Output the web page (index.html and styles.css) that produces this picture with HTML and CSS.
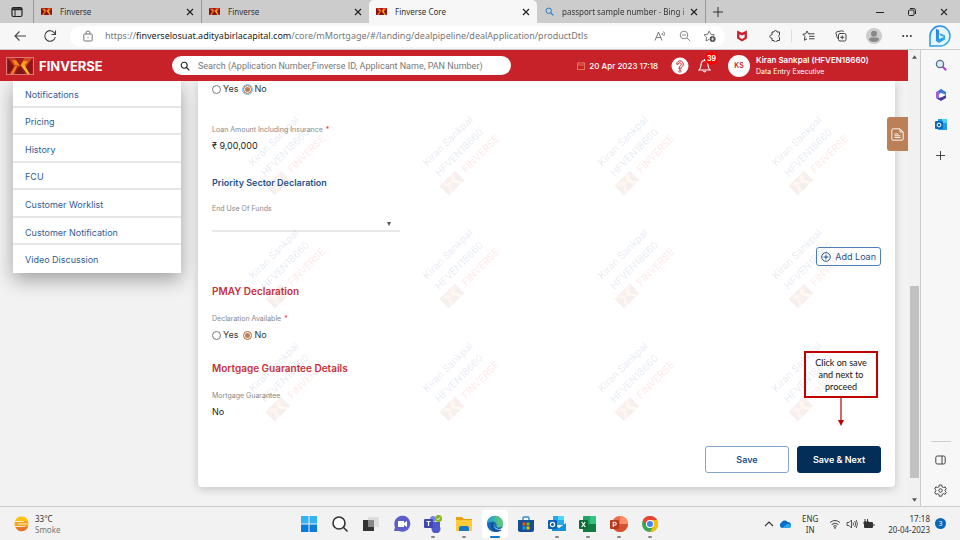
FILE: index.html
```html
<!DOCTYPE html>
<html lang="en">
<head>
<meta charset="utf-8">
<meta name="viewport" content="width=device-width, initial-scale=1">
<title>Finverse Core</title>
<link rel="stylesheet" href="styles.css">
</head>
<body>
<svg class="defs" aria-hidden="true">
  <symbol id="logo" viewBox="0 0 28 18">
    <rect width="28" height="18" fill="#a8191c"/>
    <path d="M0 0l9 9-9 9z" fill="#7c1116"/><path d="M0 0h9l5 9-5 3z" fill="#c4301c"/>
    <path d="M9 0h10l-5 9z" fill="#a8191c"/><path d="M19 0h9l-9 12-5-3z" fill="#d8481d"/>
    <path d="M28 0v18l-9-6z" fill="#8c1519"/><path d="M14 9l5 9H9z" fill="#7d1417"/>
    <path d="M11 9l-4 9H3l5-9z" fill="#ef7a1d"/><path d="M15 8l7 10h3l-6-10z" fill="#f9c22c"/>
    <path d="M5 2l5 1 4 6-6-1z" fill="#f08a1e"/><path d="M18 3l5 1-5 5-3-1z" fill="#f6a11c"/>
  </symbol>
  <symbol id="close" viewBox="0 0 8 8"><path d="M1 1l6 6M7 1L1 7" fill="none" stroke="currentColor" stroke-width="1.2"/></symbol>
  <symbol id="plus" viewBox="0 0 10 10"><path d="M5 0v10M0 5h10" fill="none" stroke="currentColor"/></symbol>
  <symbol id="search" viewBox="0 0 12 12"><circle cx="5" cy="5" r="3.6" fill="none" stroke="currentColor" stroke-width="1.3"/><path d="M7.7 7.7l3.5 3.5" stroke="currentColor" stroke-width="1.5"/></symbol>
</svg>

<nav class="tabs" aria-label="Browser tabs">
  <button class="tab-menu" aria-label="Tab actions"><svg width="12" height="12" viewBox="0 0 12 12"><rect x="1" y="1.5" width="10" height="9" rx="1.5" fill="none" stroke="#222" stroke-width="1.2"/><path d="M1 3.2h10" stroke="#222" stroke-width="2"/><path d="M4 3v7" stroke="#222"/></svg></button>
  <div class="tab"><svg class="favicon"><use href="#logo"/></svg><a href="#">Finverse</a><button aria-label="Close tab"><svg><use href="#close"/></svg></button></div>
  <div class="tab"><svg class="favicon"><use href="#logo"/></svg><a href="#">Finverse</a><button aria-label="Close tab"><svg><use href="#close"/></svg></button></div>
  <div class="tab active"><svg class="favicon"><use href="#logo"/></svg><a href="#">Finverse Core</a><button aria-label="Close tab"><svg><use href="#close"/></svg></button></div>
  <div class="tab"><svg class="favicon blue"><use href="#search"/></svg><a href="#" class="fade">passport sample number - Bing i</a><button aria-label="Close tab"><svg><use href="#close"/></svg></button></div>
  <button class="new-tab" aria-label="New tab"><svg width="10" height="10"><use href="#plus"/></svg></button>
  <div class="window-buttons">
    <button aria-label="Minimize"><svg width="8" height="8" viewBox="0 0 8 8"><path d="M0 4.5h8" stroke="#222"/></svg></button>
    <button aria-label="Restore"><svg width="8" height="8" viewBox="0 0 8 8" fill="none" stroke="#222"><rect x=".5" y="2" width="5.5" height="5.5" rx="1"/><path d="M2 .5h3.5a2 2 0 0 1 2 2V6"/></svg></button>
    <button aria-label="Close"><svg width="8" height="8"><use href="#close"/></svg></button>
  </div>
</nav>

<div class="toolbar">
  <button aria-label="Back"><svg width="14" height="12" viewBox="0 0 14 12" fill="none" stroke="#444" stroke-width="1.1"><path d="M13 6H2M6.500 1.500L2 6l4.500 4.500"/></svg></button>
  <button aria-label="Refresh"><svg width="14" height="14" viewBox="0 0 14 14" fill="none" stroke="#444" stroke-width="1.1"><path d="M12.200 5.500A5.300 5.300 0 1 0 12.300 8M12.500 1.500v4H8.500"/></svg></button>
  <div class="address">
    <svg width="10" height="12" viewBox="0 0 10 12" fill="none" stroke="#777"><rect x=".8" y="4" width="8.400" height="7" rx="1"/><path d="M3 4V3a2 2 0 0 1 4 0v1M5 7v1"/></svg>
    <div class="url" role="textbox" aria-label="Address">https://<strong>finverselosuat.adityabirlacapital.com</strong>/core/mMortgage/#/landing/dealpipeline/dealApplication/productDtls</div>
    <button aria-label="Read aloud"><svg width="13" height="12" viewBox="0 0 13 12" fill="none" stroke="#777"><path d="M1 10.500L4.500 2 8 10.500M2.300 7.500h4.400M8 3q1 1 0 2M9.500 1.500q2 2 .2 4.500"/></svg></button>
    <button aria-label="Zoom out"><svg width="12" height="12" viewBox="0 0 12 12" fill="none" stroke="#888"><circle cx="5" cy="5" r="3.800"/><path d="M3 5h4M8 8l3.200 3.200"/></svg></button>
    <button aria-label="Add favourite"><svg width="13" height="12" viewBox="0 0 13 12" fill="none" stroke="#777"><path d="M6.200 9.300L3 11l.6-3.700L1 4.800l3.600-.5L6.200 1l1.600 3.300 3.700.5-1 1"/><circle cx="9.600" cy="9" r="2.600" fill="#555" stroke="#555"/><path d="M8.200 9H11M9.600 7.600v2.800" stroke="#fff" stroke-width=".8"/></svg></button>
  </div>
  <div class="extensions">
    <button aria-label="Antivirus"><svg width="12" height="12" viewBox="0 0 10 11"><path d="M.5.500l4.500 2 4.500-2v7.300L5 10.500.5 7.800z" fill="#c8202c"/><path d="M2.600 3.800L5 5l2.400-1.200v3L5 8.200 2.600 6.800z" fill="#f7f7f7"/></svg></button>
    <button aria-label="Extensions"><svg width="12" height="12" viewBox="0 0 12 12" fill="none" stroke="#444"><path d="M3 2h2a1.500 1.500 0 0 1 3 0h2.500v3a1.400 1.400 0 0 0 0 2.500v3H8a1.500 1.500 0 0 1-3 0H3V8a1.600 1.600 0 1 1 0-3z"/></svg></button>
    <button aria-label="Favourites" class="divided"><svg width="13" height="12" viewBox="0 0 13 12" fill="none" stroke="#444"><path d="M7.500 3.800L6.500 3.800 5 1 3.700 3.800.8 4.200 3 6.500l-.6 3.800L5 8.800M7 3.800h5.500M7 6.300h5.500M7 8.800h5.500"/></svg></button>
    <button aria-label="Collections"><svg width="12" height="12" viewBox="0 0 12 12" fill="none" stroke="#444"><rect x="3.500" y="3.500" width="7.500" height="7.500" rx="1.500"/><path d="M2.500 8.500L1 3.500q-.3-1.300 1-1.700L6.500.8q1.500-.3 2 1.200M7.200 5.300v4M5.200 7.300h4"/></svg></button>
    <button aria-label="Profile"><svg width="16" height="16" viewBox="0 0 16 16"><circle cx="8" cy="8" r="8" fill="#ccc"/><circle cx="8" cy="5.800" r="3" fill="#888"/><path d="M3 12q0-2.500 2.500-2.500h5Q13 9.500 13 12q-2 2-5 2t-5-2z" fill="#888"/></svg></button>
    <button aria-label="Settings and more"><svg width="10" height="4" viewBox="0 0 10 4" fill="#333"><circle cx="1.200" cy="2" r="1"/><circle cx="5" cy="2" r="1"/><circle cx="8.800" cy="2" r="1"/></svg></button>
    <button aria-label="Bing chat"><svg width="22" height="22" viewBox="0 0 22 22"><defs><linearGradient id="bing" x1="0" y1="0" x2="1" y2="1"><stop stop-color="#2b7de8"/><stop offset="1" stop-color="#2ab7e8"/></linearGradient></defs><path d="M1 21V11A10 10 0 1 1 11 21z" fill="#e9f5fe" stroke="url(#bing)" stroke-width="1.500"/><path d="M7 4l3 1v9l5-2-3.500-1.500L10 8l6 2.500v4L10 18l-3-2z" fill="url(#bing)"/></svg></button>
  </div>
</div>

<div class="browser">
  <div class="page">
    <header class="app-header">
      <svg class="brand-logo"><use href="#logo"/></svg>
      <span class="brand">FINVERSE</span>
      <label class="search"><svg><use href="#search"/></svg><input type="search" aria-label="Search" placeholder="Search (Application Number,Finverse ID, Applicant Name, PAN Number)"></label>
      <div class="date"><svg width="8" height="8" viewBox="0 0 8 8" fill="none" stroke="#e0745a"><rect x=".5" y="1" width="7" height="6.500"/><path d="M.5 3h7M2 0v1M6 0v1"/></svg><time>20 Apr 2023 17:18</time></div>
      <button class="help" aria-label="Help"><svg width="18" height="18" viewBox="0 0 18 18"><circle cx="9" cy="9" r="8.500" fill="#fff"/><path d="M5.700 7.200a3.300 3.300 0 1 1 5.300 2.600Q9.800 10.600 9.800 12H8q0-2.500 1.500-3.400a1.500 1.500 0 1 0-2.200-1.400z" fill="none" stroke="#c7222a"/><circle cx="8.900" cy="14.200" r="1.100" fill="none" stroke="#c7222a" stroke-width=".8"/></svg></button>
      <button class="bell" aria-label="Notifications"><svg width="13" height="15" viewBox="0 0 13 15" fill="none" stroke="#fff" stroke-width="1.100"><path d="M1 12h11q-1.700-1.500-2-5-.2-4.500-3.500-4.500T3 7q-.3 3.500-2 5zM5 13q1.500 1.800 3 0M6.500 1v1.500"/></svg><span>39</span></button>
      <span class="avatar">KS</span>
      <div class="user"><strong>Kiran Sankpal (HFVEN18660)</strong><span>Data Entry Executive</span></div>
    </header>
    <div class="content">
      <nav class="side-menu" aria-label="Application">
        <a href="#">Notifications</a>
        <a href="#">Pricing</a>
        <a href="#">History</a>
        <a href="#">FCU</a>
        <a href="#">Customer Worklist</a>
        <a href="#">Customer Notification</a>
        <a href="#">Video Discussion</a>
      </nav>
      <main class="card">
        <div class="radios">
          <label><input type="radio" name="insurance">Yes</label>
          <label><input type="radio" name="insurance" class="focused" checked>No</label>
        </div>
        <section class="loan">
          <div class="label">Loan Amount Including Insurance <em>*</em></div>
          <div class="value">₹ 9,00,000</div>
        </section>
        <section class="priority">
          <h3>Priority Sector Declaration</h3>
          <label class="label" for="funds">End Use Of Funds</label>
          <div class="select"><select id="funds"><option></option></select></div>
        </section>
        <button class="add"><svg width="10" height="10" viewBox="0 0 10 10" fill="none" stroke="currentColor"><circle cx="5" cy="5" r="4.300"/><path d="M5 2.500v5M2.500 5h5"/></svg>Add Loan</button>
        <section class="pmay">
          <h2>PMAY Declaration</h2>
          <div class="label">Declaration Available <em>*</em></div>
          <div class="radios">
            <label><input type="radio" name="pmay">Yes</label>
            <label><input type="radio" name="pmay" checked>No</label>
          </div>
        </section>
        <section class="guarantee">
          <h2>Mortgage Guarantee Details</h2>
          <div class="label">Mortgage Guarantee</div>
          <div class="value">No</div>
        </section>
        <div class="actions"><button>Save</button><button class="primary">Save &amp; Next</button></div>
        <div class="watermarks" aria-hidden="true">
          <div><p>Kiran Sankpal<br>HFVEN18660<br><svg><use href="#logo"/></svg><b>FINVERSE</b></p></div>
          <div><p>Kiran Sankpal<br>HFVEN18660<br><svg><use href="#logo"/></svg><b>FINVERSE</b></p></div>
          <div><p>Kiran Sankpal<br>HFVEN18660<br><svg><use href="#logo"/></svg><b>FINVERSE</b></p></div>
          <div><p>Kiran Sankpal<br>HFVEN18660<br><svg><use href="#logo"/></svg><b>FINVERSE</b></p></div>
          <div><p>Kiran Sankpal<br>HFVEN18660<br><svg><use href="#logo"/></svg><b>FINVERSE</b></p></div>
          <div><p>Kiran Sankpal<br>HFVEN18660<br><svg><use href="#logo"/></svg><b>FINVERSE</b></p></div>
          <div><p>Kiran Sankpal<br>HFVEN18660<br><svg><use href="#logo"/></svg><b>FINVERSE</b></p></div>
          <div><p>Kiran Sankpal<br>HFVEN18660<br><svg><use href="#logo"/></svg><b>FINVERSE</b></p></div>
          <div><p>Kiran Sankpal<br>HFVEN18660<br><svg><use href="#logo"/></svg><b>FINVERSE</b></p></div>
          <div><p>Kiran Sankpal<br>HFVEN18660<br><svg><use href="#logo"/></svg><b>FINVERSE</b></p></div>
          <div><p>Kiran Sankpal<br>HFVEN18660<br><svg><use href="#logo"/></svg><b>FINVERSE</b></p></div>
          <div><p>Kiran Sankpal<br>HFVEN18660<br><svg><use href="#logo"/></svg><b>FINVERSE</b></p></div>
        </div>
        <div class="callout"><p>Click on save and next to proceed</p><svg width="8" height="28" viewBox="0 0 8 28"><path d="M4 0v24" stroke="#c00000" stroke-width="1.200"/><path d="M1 22h6l-3 6z" fill="#c00000"/></svg></div>
      </main>
      <button class="notes" aria-label="Notes"><svg width="13" height="13" viewBox="0 0 13 13" fill="none" stroke="#fff"><path d="M2 .8h7L12.200 4v7q0 1.200-1.200 1.200H2q-1.200 0-1.200-1.200V2Q.8.800 2 .8zM9 1v3h3M3.500 6h4M3.500 7.800h6M3.500 9.600h6" stroke-width=".9"/></svg></button>
    </div>
  </div>
  <div class="scrollbar" aria-hidden="true"><svg viewBox="0 0 6 4"><path d="M0 4l3-4 3 4z"/></svg><span></span><svg viewBox="0 0 6 4"><path d="M0 0l3 4 3-4z"/></svg></div>
  <aside class="edge-bar">
    <button aria-label="Search"><svg width="12" height="12" viewBox="0 0 12 12"><circle cx="5" cy="5" r="3.600" fill="#d8ecfa" stroke="#5b6e80" stroke-width="1.300"/><path d="M7.500 7.500l3.700 3.700" stroke="#b53fd6" stroke-width="2"/></svg></button>
    <button aria-label="Microsoft 365"><svg width="12" height="12" viewBox="0 0 12 12"><path d="M6 0L1 3v6l3 2V5l4-3z" fill="#9a63dc"/><path d="M6 0l5 3v3L8 4.500 4 6V2z" fill="#3478d8"/><path d="M11 6v3l-5 3-4-2.500L7 8z" fill="#4c3a9d"/><circle cx="6" cy="6" r="1.900" fill="#fff"/></svg></button>
    <button aria-label="Outlook"><svg width="12" height="12" viewBox="0 0 12 12"><path d="M3 0h9v11H3z" fill="#1e9de6"/><path d="M7 0h5v4H7z" fill="#50d0f5"/><rect y="2" width="8" height="8" rx="1" fill="#0968b8"/><circle cx="4" cy="6" r="1.900" fill="none" stroke="#fff"/></svg></button>
    <button aria-label="Add"><svg width="9" height="9"><use href="#plus"/></svg></button>
    <hr>
    <button aria-label="Toggle sidebar"><svg width="11" height="10" viewBox="0 0 11 10" fill="none" stroke="#444"><rect x=".8" y="1" width="9.400" height="8" rx="1.500"/><path d="M7 1v8"/></svg></button>
    <button aria-label="Settings"><svg width="13" height="13" viewBox="0 0 13 13" fill="none" stroke="#444"><path d="M5.300 1h2.400l.4 1.800 1.300.7 1.700-.6 1.200 2-1.300 1.300v.8l1.300 1.300-1.200 2-1.700-.6-1.300.7-.4 1.800H5.300l-.4-1.800-1.300-.7-1.700.6-1.200-2L2 7V6.200L.7 4.900l1.200-2 1.700.6 1.300-.7z"/><circle cx="6.500" cy="6.500" r="1.700"/></svg></button>
  </aside>
</div>

<footer class="taskbar">
  <div class="weather"><svg width="16" height="16" viewBox="0 0 16 16"><circle cx="8.500" cy="8" r="7" fill="#f9a51b"/><path d="M2 5a7 7 0 0 1 13 0z" fill="#fdc30e"/><path d="M3 11h12a7 7 0 0 1-10.500 3z" fill="#e8762c"/><path d="M2 5.500h9M5 8h10M0 10.500h12" stroke="#fbe9c8"/></svg><div>33°C<br><span>Smoke</span></div></div>
  <div class="apps">
    <button aria-label="Start"><svg viewBox="0 0 18 18"><path d="M1 1h7.500v7.500H1zM9.500 1H17v7.500H9.500z" fill="#35b3f0"/><path d="M1 9.500h7.500V17H1zM9.500 9.500H17V17H9.500z" fill="#0b7cd8"/></svg></button>
    <button aria-label="Search"><svg viewBox="0 0 18 18" fill="#fff" stroke="#333" stroke-width="1.600"><circle cx="8" cy="8" r="6"/><path d="M12.500 12.500l4 4"/></svg></button>
    <button aria-label="Task view"><svg viewBox="0 0 18 18"><path d="M6 2h11v10H6z" fill="#ddd"/><path d="M1 5h11v11H1z" fill="#333"/><path d="M6 5h6v7H6z" fill="#888"/></svg></button>
    <button aria-label="Chat"><svg viewBox="0 0 18 18"><path d="M1 16l1-4a8 8 0 1 1 4 4z" fill="#5b5fc7"/><path d="M5 6h6v6H5zM11 8l3-2v6l-3-2z" fill="#fff"/></svg></button>
    <button aria-label="Teams" class="running"><svg viewBox="0 0 18 18"><circle cx="9" cy="4" r="3" fill="#7b83eb"/><path d="M6 7h10v5a4 4 0 0 1-8 4z" fill="#5059c9"/><rect y="4" width="9" height="9" rx="1" fill="#4048ad"/><path d="M2.500 6.500h4M4.500 6.500V11" stroke="#fff" stroke-width="1.200"/><circle cx="14.500" cy="3.500" r="3.500" fill="#84b51c"/><path d="M12.800 3.500l1.200 1.300 2.200-2.300" fill="none" stroke="#fff"/></svg></button>
    <button aria-label="File Explorer" class="running"><svg viewBox="0 0 18 18"><path d="M1 2h6l2 2h8v12H1z" fill="#e8a010"/><path d="M1 5h16v11H1z" fill="#fdca3a"/><path d="M4 16v-3q0-2 2-2h6q2 0 2 2v3z" fill="#1477c8"/></svg></button>
    <button aria-label="Edge" class="running current"><svg viewBox="0 0 18 18"><defs><linearGradient id="edge-top"><stop stop-color="#219bd8"/><stop offset="1" stop-color="#64d06a"/></linearGradient></defs><circle cx="9" cy="9" r="8" fill="#1467b4"/><path d="M1 9a8 8 0 0 1 16-.5q0 4-4 4-3 0-2.500-2 .5-3-3-4Q3 6 1 9z" fill="url(#edge-top)"/><path d="M7 8q-3 4 1 7 4 2 7 0" fill="none" stroke="#0b4b92" stroke-width="1.500"/><path d="M9 8q-2 3 1.500 5.500 3 1.500 6-.5l-1 1.500q-3.500 1-6-1Q7 10.500 9 8z" fill="#eef7fb"/></svg></button>
    <button aria-label="Store"><svg viewBox="0 0 18 18"><path d="M6 5V3q0-1 1-1h4q1 0 1 1v2" fill="none" stroke="#2b8ad0" stroke-width="1.300"/><path d="M1 5h16v10q0 2-2 2H3q-2 0-2-2z" fill="#134f92"/><path d="M5.500 7.500h3v3h-3z" fill="#f25022"/><path d="M9.500 7.500h3v3h-3z" fill="#7fba00"/><path d="M5.500 11.500h3v3h-3z" fill="#00a4ef"/><path d="M9.500 11.500h3v3h-3z" fill="#ffb900"/></svg></button>
    <button aria-label="Outlook" class="running"><svg viewBox="0 0 18 18"><path d="M5 1h11v9H5z" fill="#28a8ea"/><path d="M10 1h6v4h-6z" fill="#50d9ff"/><path d="M4 8l7 5 7-5v8H4z" fill="#1490df"/><rect y="5" width="9" height="9" rx="1" fill="#0a5fb0"/><circle cx="4.500" cy="9.500" r="2.100" fill="none" stroke="#fff" stroke-width="1.200"/></svg></button>
    <button aria-label="Excel" class="running"><svg viewBox="0 0 18 18"><rect x="4" y="1" width="13" height="16" rx="1" fill="#21a366"/><path d="M4 9h13v8H4z" fill="#107c41"/><path d="M11 1h6v8h-6z" fill="#33c481"/><rect y="5" width="9" height="9" rx="1" fill="#0e6b38"/><path d="M2.700 7l3.600 5M6.300 7l-3.600 5" stroke="#fff" stroke-width="1.200"/></svg></button>
    <button aria-label="PowerPoint" class="running"><svg viewBox="0 0 18 18"><circle cx="10" cy="9" r="8" fill="#ed6c47"/><path d="M10 1a8 8 0 0 1 8 8h-8z" fill="#ff8f6b"/><path d="M2 9h16a8 8 0 0 1-16 0z" fill="#d35230"/><rect y="5" width="9" height="9" rx="1" fill="#b7381c"/><path d="M3.200 12V7.300h1.500a1.500 1.500 0 0 1 0 3H3.200" fill="none" stroke="#fff" stroke-width="1.100"/></svg></button>
    <button aria-label="Chrome" class="running"><svg viewBox="0 0 18 18"><circle cx="9" cy="9" r="8" fill="#34a853"/><path d="M2.100 5A8 8 0 0 1 16 5H9l-3.500 6z" fill="#ea4335"/><path d="M16 5a8 8 0 0 1-7 12l3.500-6L9 5z" fill="#fbbc05"/><circle cx="9" cy="9" r="4" fill="#fff"/><circle cx="9" cy="9" r="3" fill="#4285f4"/></svg></button>
  </div>
  <div class="tray">
    <svg width="10" height="6" viewBox="0 0 10 6" fill="none" stroke="#333" stroke-width="1.100"><path d="M1 5l4-4 4 4"/></svg>
    <svg width="12" height="8" viewBox="0 0 12 8"><path d="M3 8a3 3 0 0 1-.5-5.500A3.500 3.500 0 0 1 8.500 2 3 3 0 0 1 9.500 8z" fill="#0a6cc4"/><path d="M3 8l5-4q4-.5 4 2T9.500 8z" fill="#28a8ea"/></svg>
    <div class="language">ENG<br>IN</div>
    <svg width="12" height="10" viewBox="0 0 12 10" fill="none" stroke="#444"><path d="M1 3.500q5-4 10 0M2.700 5.500q3.300-2.700 6.600 0M4.200 7.300q1.800-1.500 3.600 0"/><circle cx="6" cy="8.800" r=".6"/></svg>
    <svg width="12" height="10" viewBox="0 0 12 10" fill="none" stroke="#444"><path d="M1 3.500h2L5.500 1v8L3 6.500H1zM7 3.500q1 1.500 0 3M8.700 2q2 3 0 6M10.300 1q2.300 4 0 8" stroke-width=".9"/></svg>
    <svg width="12" height="10" viewBox="0 0 12 10"><rect x="1" y="3" width="9" height="6" rx="1" fill="#333"/><path d="M11 5v2M2 0v3M4.500 0v3M1 3h5v2H1z" stroke="#333" fill="#333"/></svg>
    <div class="clock">17:18<br>20-04-2023</div>
    <span class="count">3</span>
  </div>
</footer>
</body>
</html>
```
FILE: styles.css
```css
* { box-sizing: border-box; }
body {
  margin: 0;
  min-height: 100vh;
  display: flex;
  flex-direction: column;
  font: 9px/12px Inter, sans-serif;
  color: #333;
  background: #f2f2f2;
}
button { border: 0; padding: 0; background: none; font: inherit; color: inherit; display: flex; align-items: center; justify-content: center; }
a { color: inherit; text-decoration: none; }
p, h2, h3 { margin: 0; }
svg { display: block; flex: none; }
.defs { position: absolute; width: 0; height: 0; }

/* Browser tabs */
.tabs { display: flex; height: 23px; background: #ccc; font-family: "Noto Sans", sans-serif; font-size: 8px; }
.tab-menu { width: 33px; }
.tab { display: flex; align-items: center; flex: 0 1 168px; min-width: 0; padding: 0 7px; border-left: 1px solid #999; }
.tab a { flex: 1; min-width: 0; margin-left: 8px; overflow: hidden; white-space: nowrap; }
.tab .fade { mask-image: linear-gradient(to right, #000 90%, #0006); }
.tab button svg { width: 8px; height: 8px; color: #222; }
.favicon { width: 11px; height: 7px; }
.favicon.blue { width: 9px; height: 9px; color: #1a78cc; }
.tab.active { background: #f7f7f7; border: 0; border-radius: 5px 5px 0 0; }
.tab.active + .tab { border-left-color: transparent; }
.new-tab { width: 24px; border-left: 1px solid #999; }
.window-buttons { display: flex; margin-left: auto; }
.window-buttons button { width: 32px; }

/* Address bar */
.toolbar { display: flex; align-items: center; height: 27px; padding: 0 4px 0 5px; background: #f7f7f7; border-bottom: 1px solid #ccc; }
.toolbar > button { width: 30px; }
.address { flex: 1; min-width: 0; display: flex; align-items: center; gap: 12px; height: 21px; margin-left: 5px; padding: 0 9px 0 13px; border-radius: 10px; background: #fff; }
.url { flex: 1; min-width: 0; overflow: hidden; white-space: nowrap; font: 9px/14px "Noto Sans", sans-serif; color: #777; }
.url strong { font-weight: 400; color: #222; }
.extensions { display: flex; align-items: center; }
.extensions button { width: 33px; height: 12px; }
.extensions .divided { border-left: 1px solid #ddd; }

/* Application frame */
.browser { flex: 1; display: flex; }
.page { flex: 1; min-width: 0; display: flex; flex-direction: column; background: #f2f2f2; }
.app-header { position: relative; z-index: 2; display: flex; align-items: center; height: 31px; padding: 0 8px 0 6px; background: #c7222a; color: #fff; }
.brand-logo { width: 28px; height: 18px; border: 1px solid #d77; }
.brand { margin-left: 5px; width: 133px; font-size: 13px; font-weight: 700; }
.search { display: flex; align-items: center; gap: 8px; width: 339px; height: 19px; padding: 0 8px; border-radius: 10px; background: #fff; color: #222; }
.search svg { width: 10px; height: 10px; }
.search input { flex: 1; min-width: 0; border: 0; padding: 0; outline: 0; background: none; font: 9px/14px Roboto, sans-serif; }
.search input::placeholder { color: #777; opacity: 1; }
.date { display: flex; align-items: center; gap: 4px; margin-left: auto; font-size: 8px; font-weight: 500; }
.help { margin-left: 13px; }
.bell { position: relative; margin-left: 9px; }
.bell span { position: absolute; left: 7px; top: -6px; width: 13px; border-radius: 7px; background: #f00; font-size: 7px; line-height: 13px; font-weight: 700; }
.avatar { margin: 0 6px 0 17px; width: 22px; line-height: 22px; border-radius: 50%; background: #fff; color: #c7222a; text-align: center; font-size: 7px; font-weight: 600; }
.user { width: 144px; white-space: nowrap; font-size: 8px; }
.user strong, .user span { display: block; }
.user strong { font-weight: 600; }
.user span { font-size: 7px; }
.content { position: relative; flex: 1; display: flex; align-items: flex-start; gap: 17px; padding: 0 13px 19px; }
.side-menu { display: grid; grid-auto-rows: 1fr; width: 168px; height: 193px; margin-top: -1px; background: #fff; box-shadow: 0 7px 18px #0005; color: #2f5c92; }
.side-menu a { display: flex; align-items: center; padding: 4px 12px 0; border-bottom: 2px solid #e6e6e6; }
.side-menu a:last-child { border-color: #fff; }

/* Form card */
.card { position: relative; flex: 1; height: 406px; padding: 0 14px; border-radius: 0 0 4px 4px; background: #fff; box-shadow: 0 2px 10px #0003; }
.label { display: block; font-size: 7px; line-height: 10px; color: #888; }
.label em { margin-left: 1px; color: #e33; font-style: normal; }
.value { margin-top: 5px; line-height: 12px; color: #222; }
.radios { display: flex; gap: 5px; padding-top: 2px; }
.radios label { display: flex; align-items: center; gap: 2px; }
.radios input { appearance: none; width: 9px; height: 9px; margin: 0; border: 1px solid #777; border-radius: 50%; background: #fff; }
.radios input:checked { border-color: #bb8058; background: #bb8058; box-shadow: inset 0 0 0 1px #fff; }
.radios .focused { outline: 1px solid #7fbcec; }
h2 { font-size: 10px; line-height: 14px; font-weight: 600; color: #c8303a; }
h3 { font-size: 9px; line-height: 12px; font-weight: 600; color: #24528c; }
.loan { margin-top: 30px; }
.priority { margin-top: 25px; }
.priority .label { margin-top: 15px; }
.select { position: relative; width: 188px; border-bottom: 2px solid #e8e8e8; }
.select select { display: block; appearance: none; width: 100%; height: 16px; border: 0; background: none; }
.select::after { content: ""; position: absolute; right: 9px; top: 8px; border: 2px solid transparent; border-top: 4px solid #555; border-bottom: 0; }
.add { gap: 4px; height: 19px; margin: 15px 0 0 auto; padding: 0 4px; border: 1px solid #4e80b5; border-radius: 3px; color: #24528c; }
.pmay { margin-top: 18px; }
.pmay .label, .guarantee .label { margin-top: 16px; }
.pmay .radios { padding-top: 5px; }
.guarantee { margin-top: 20px; }
.actions { display: flex; justify-content: flex-end; gap: 8px; margin-top: 28px; }
.actions button { width: 84px; height: 27px; border: 1px solid #82a6ce; border-radius: 3px; font-weight: 600; color: #24528c; }
.actions .primary { background: #032e57; border-color: #032e57; color: #fff; }
.watermarks { position: absolute; inset: 15px 0 auto; display: grid; grid-template-columns: repeat(4, 1fr); grid-auto-rows: 113px; place-items: center; pointer-events: none; opacity: .11; }
.watermarks p { transform: rotate(-45deg); text-align: center; white-space: nowrap; font-size: 10px; line-height: 16px; color: #24528c; }
.watermarks svg { display: inline-block; width: 22px; height: 14px; margin-right: 6px; vertical-align: middle; opacity: .6; }
.watermarks b { font-weight: 400; color: #e33; }
.callout { position: absolute; right: 17px; top: 270px; width: 74px; display: flex; flex-direction: column; align-items: center; }
.callout p { padding: 4px 6px 3px; border: 2px solid #c00000; text-align: center; font: 9px/12px Lato, sans-serif; color: #111; }
.notes { position: absolute; right: 0; top: 36px; width: 21px; height: 34px; border-radius: 3px 0 0 3px; background: #bb8058; }

/* Right-hand browser edge */
.scrollbar { display: flex; flex-direction: column; align-items: center; justify-content: space-between; width: 13px; padding: 5px 0 4px; background: #f1f1f1; border-right: 1px solid #ccc; }
.scrollbar svg { width: 5px; height: 4px; fill: #555; }
.scrollbar span { width: 9px; height: 192px; margin: auto 0 20px; background: #c1c1c1; }
.edge-bar { display: flex; flex-direction: column; align-items: center; width: 39px; background: #f7f7f7; }
.edge-bar button { height: 30px; width: 100%; }
.edge-bar hr { width: 20px; margin: auto 0 3px; border: 0; border-top: 1px solid #ccc; }
.edge-bar button:last-child { margin-bottom: 1px; }

/* Taskbar */
.taskbar { position: relative; z-index: 1; display: grid; grid-template-columns: 1fr auto 1fr; align-items: center; height: 34px; padding: 0 14px 0 13px; border-top: 1px solid #ccc; background: #f2f2f2; font: 8px/11px "Noto Sans", sans-serif; color: #333; }
.weather { display: flex; gap: 6px; align-items: center; }
.weather span { color: #777; }
.apps { display: flex; gap: 5px; }
.apps button { position: relative; width: 26px; height: 28px; border-radius: 3px; }
.apps svg { width: 18px; height: 18px; }
.apps .running::after { content: ""; position: absolute; left: 11px; bottom: 0; width: 4px; height: 2px; border-radius: 1px; background: #888; }
.apps .current { background: #fff; }
.apps .current::after { left: 8px; width: 10px; background: #0b78d0; }
.tray { display: flex; align-items: center; justify-content: flex-end; gap: 5px; }
.language { width: 28px; text-align: center; }
.clock { margin-left: 8px; text-align: right; }
.count { width: 11px; line-height: 11px; border-radius: 50%; background: #0a68b8; color: #fff; text-align: center; font-size: 7px; }
```
